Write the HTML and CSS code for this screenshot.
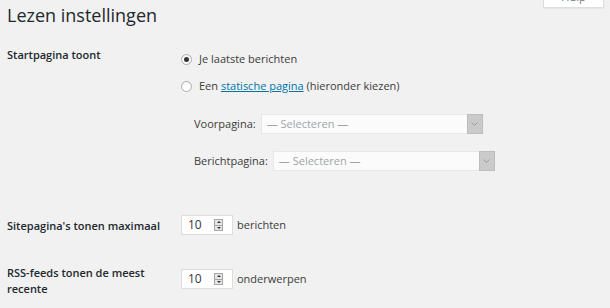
FILE: index.html
```html
<!DOCTYPE html>
<html lang="nl">
<head>
    <meta charset="UTF-8">
    <title>Lezen instellingen</title>
    <link rel="stylesheet" href="styles.css">
</head>
<body>
    <div class="wrap">
        <div class="page-head">
            <h1>Lezen instellingen</h1>
            <button class="help-tab">Hulp</button>
        </div>

        <div class="form-row row-front">
            <div class="row-label">Startpagina toont</div>
            <div class="row-field">
                <label class="radio-line">
                    <span class="radio checked"></span>
                    Je laatste berichten
                </label>
                <label class="radio-line">
                    <span class="radio"></span>
                    Een&nbsp;<a href="#">statische pagina</a>&nbsp;(hieronder kiezen)
                </label>
                <div class="page-select first">
                    <span>Voorpagina:</span>
                    <div class="select">
                        <span class="select-text">&mdash; Selecteren &mdash;</span>
                        <span class="select-arrow"><svg width="7" height="4" viewBox="0 0 7 4"><path d="M0.5 0.5 L3.5 3.5 L6.5 0.5" fill="none" stroke="#9a9a9a" stroke-width="1"/></svg></span>
                    </div>
                </div>
                <div class="page-select">
                    <span>Berichtpagina:</span>
                    <div class="select">
                        <span class="select-text">&mdash; Selecteren &mdash;</span>
                        <span class="select-arrow"><svg width="7" height="4" viewBox="0 0 7 4"><path d="M0.5 0.5 L3.5 3.5 L6.5 0.5" fill="none" stroke="#9a9a9a" stroke-width="1"/></svg></span>
                    </div>
                </div>
            </div>
        </div>

        <div class="form-row row-posts">
            <div class="row-label">Sitepagina's tonen maximaal</div>
            <div class="row-field inline">
                <div class="number">
                    <span>10</span>
                    <span class="spinner"><i class="up"></i><i class="down"></i></span>
                </div>
                berichten
            </div>
        </div>

        <div class="form-row row-rss">
            <div class="row-label">RSS-feeds tonen de meest recente</div>
            <div class="row-field inline">
                <div class="number">
                    <span>10</span>
                    <span class="spinner"><i class="up"></i><i class="down"></i></span>
                </div>
                onderwerpen
            </div>
        </div>
    </div>
</body>
</html>
```

FILE: styles.css
```css
body {
    margin: 0;
    background-color: #f1f1f1;
    color: #3c3c3c;
    font-family: "Open Sans", sans-serif;
    font-size: 11px;
    line-height: 16px;
}

.wrap {
    padding: 0 6px 0 7px;
}

.page-head {
    display: flex;
    justify-content: space-between;
    align-items: flex-start;
    height: 47px;
}

h1 {
    margin: 0;
    padding-top: 3px;
    font-size: 18px;
    font-weight: 400;
    line-height: 24px;
    color: #23282d;
}

.help-tab {
    margin-top: -14px;
    width: 61px;
    height: 22px;
    background: #fff;
    border: 1px solid #ddd;
    border-top: none;
    box-shadow: 0 1px 1px rgba(0, 0, 0, 0.04);
    font-family: "Open Sans", sans-serif;
    font-size: 11px;
    color: #72777c;
    padding: 0;
}

.form-row {
    display: flex;
}

.row-label {
    width: 166px;
    padding-right: 8px;
    flex-shrink: 0;
    font-weight: 600;
    color: #23282d;
}

.row-field {
    display: flex;
    flex-direction: column;
    padding-top: 4px;
}

.radio-line {
    display: flex;
    align-items: center;
    height: 16px;
    margin-bottom: 11px;
}

.radio {
    width: 11px;
    height: 11px;
    border: 1px solid #a9aeb3;
    border-radius: 50%;
    background: #fff;
    box-sizing: border-box;
    margin-right: 7px;
    display: flex;
    align-items: center;
    justify-content: center;
    box-shadow: inset 0 1px 2px rgba(0, 0, 0, 0.07);
}

.radio.checked::before {
    content: "";
    width: 5px;
    height: 5px;
    border-radius: 50%;
    background: #333;
}

a {
    color: #0073aa;
}

.page-select {
    display: flex;
    align-items: center;
    padding-left: 13px;
    height: 20px;
}

.page-select.first {
    margin-top: 9px;
}

.page-select + .page-select {
    margin-top: 17px;
}

.select {
    display: flex;
    margin-left: 5px;
    width: 222px;
    height: 20px;
    box-sizing: border-box;
    border: 1px solid #e8e8e8;
    background: #fbfbfb;
}

.select-text {
    flex: 1;
    padding-left: 5px;
    color: #a0a5aa;
    line-height: 18px;
}

.select-arrow {
    width: 14px;
    margin: -1px -1px -1px 0;
    background: #cacaca;
    border: 1px solid #bdbdbd;
    display: flex;
    align-items: center;
    justify-content: center;
}

.row-posts {
    margin-top: 44px;
}

.row-posts .row-label {
    padding-top: 3px;
}

.row-posts .row-field {
    padding-top: 0;
}

.row-field.inline {
    flex-direction: row;
    align-items: center;
    align-self: flex-start;
}

.number {
    display: flex;
    align-items: center;
    width: 52px;
    height: 20px;
    box-sizing: border-box;
    border: 1px solid #ddd;
    background: #fff;
    margin-right: 4px;
    padding-left: 6px;
    color: #32373c;
    font-size: 12px;
}

.number span:first-child {
    flex: 1;
}

.spinner {
    display: flex;
    flex-direction: column;
    width: 9px;
    height: 12px;
    margin-right: 9px;
    border: 1px solid #a6a6a6;
    background: #e6e6e6;
    box-sizing: border-box;
}

.spinner i {
    flex: 1;
    display: flex;
    align-items: center;
    justify-content: center;
}

.spinner i::before {
    content: "";
    border-left: 2px solid transparent;
    border-right: 2px solid transparent;
}

.spinner .up::before {
    border-bottom: 2px solid #333;
}

.spinner .down {
    border-top: 1px solid #a6a6a6;
}

.spinner .down::before {
    border-top: 2px solid #333;
}

.row-rss {
    margin-top: 30px;
}
```
